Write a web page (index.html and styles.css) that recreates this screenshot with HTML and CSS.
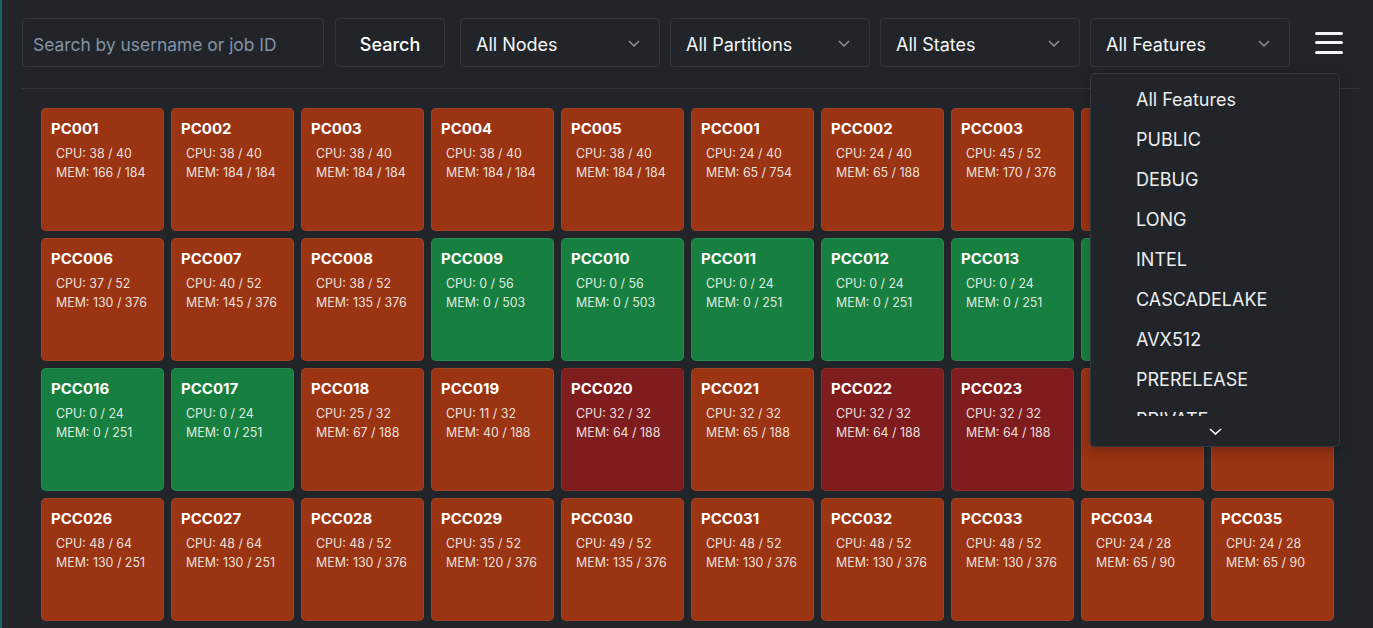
FILE: index.html
```html
<!DOCTYPE html>
<html lang="en">
<head>
<meta charset="utf-8">
<title>Cluster Nodes</title>
<link rel="stylesheet" href="styles.css">
</head>
<body>
<div class="app">
  <header class="toolbar">
    <input class="search-input" type="text" placeholder="Search by username or job ID">
    <button class="btn-search">Search</button>
    <div class="select">
      <span>All Nodes</span>
      <svg class="chev" width="12" height="7" viewBox="0 0 12 7"><polyline points="1,1 6,6 11,1" fill="none" stroke="#8b9096" stroke-width="1.5"/></svg>
    </div>
    <div class="select">
      <span>All Partitions</span>
      <svg class="chev" width="12" height="7" viewBox="0 0 12 7"><polyline points="1,1 6,6 11,1" fill="none" stroke="#8b9096" stroke-width="1.5"/></svg>
    </div>
    <div class="select">
      <span>All States</span>
      <svg class="chev" width="12" height="7" viewBox="0 0 12 7"><polyline points="1,1 6,6 11,1" fill="none" stroke="#8b9096" stroke-width="1.5"/></svg>
    </div>
    <div class="select select-open">
      <span>All Features</span>
      <svg class="chev" width="12" height="7" viewBox="0 0 12 7"><polyline points="1,1 6,6 11,1" fill="none" stroke="#8b9096" stroke-width="1.5"/></svg>
      <div class="dropdown">
        <ul class="dropdown-list">
          <li>All Features</li>
          <li>PUBLIC</li>
          <li>DEBUG</li>
          <li>LONG</li>
          <li>INTEL</li>
          <li>CASCADELAKE</li>
          <li>AVX512</li>
          <li>PRERELEASE</li>
          <li>PRIVATE</li>
          <li>AMD</li>
        </ul>
        <div class="dropdown-more">
          <svg width="13" height="7" viewBox="0 0 13 7"><polyline points="1,1 6.5,6 12,1" fill="none" stroke="#ffffff" stroke-width="1.6"/></svg>
        </div>
      </div>
    </div>
    <button class="menu-btn" aria-label="Menu"><span></span><span></span><span></span></button>
  </header>
  <hr class="divider">
  <main class="grid">
    <div class="card busy"><div class="name">PC001</div><div class="stat">CPU: 38 / 40</div><div class="stat">MEM: 166 / 184</div></div>
    <div class="card busy"><div class="name">PC002</div><div class="stat">CPU: 38 / 40</div><div class="stat">MEM: 184 / 184</div></div>
    <div class="card busy"><div class="name">PC003</div><div class="stat">CPU: 38 / 40</div><div class="stat">MEM: 184 / 184</div></div>
    <div class="card busy"><div class="name">PC004</div><div class="stat">CPU: 38 / 40</div><div class="stat">MEM: 184 / 184</div></div>
    <div class="card busy"><div class="name">PC005</div><div class="stat">CPU: 38 / 40</div><div class="stat">MEM: 184 / 184</div></div>
    <div class="card busy"><div class="name">PCC001</div><div class="stat">CPU: 24 / 40</div><div class="stat">MEM: 65 / 754</div></div>
    <div class="card busy"><div class="name">PCC002</div><div class="stat">CPU: 24 / 40</div><div class="stat">MEM: 65 / 188</div></div>
    <div class="card busy"><div class="name">PCC003</div><div class="stat">CPU: 45 / 52</div><div class="stat">MEM: 170 / 376</div></div>
    <div class="card busy"><div class="name">PCC004</div><div class="stat">CPU: 40 / 52</div><div class="stat">MEM: 150 / 376</div></div>
    <div class="card busy"><div class="name">PCC005</div><div class="stat">CPU: 40 / 52</div><div class="stat">MEM: 150 / 376</div></div>

    <div class="card busy"><div class="name">PCC006</div><div class="stat">CPU: 37 / 52</div><div class="stat">MEM: 130 / 376</div></div>
    <div class="card busy"><div class="name">PCC007</div><div class="stat">CPU: 40 / 52</div><div class="stat">MEM: 145 / 376</div></div>
    <div class="card busy"><div class="name">PCC008</div><div class="stat">CPU: 38 / 52</div><div class="stat">MEM: 135 / 376</div></div>
    <div class="card idle"><div class="name">PCC009</div><div class="stat">CPU: 0 / 56</div><div class="stat">MEM: 0 / 503</div></div>
    <div class="card idle"><div class="name">PCC010</div><div class="stat">CPU: 0 / 56</div><div class="stat">MEM: 0 / 503</div></div>
    <div class="card idle"><div class="name">PCC011</div><div class="stat">CPU: 0 / 24</div><div class="stat">MEM: 0 / 251</div></div>
    <div class="card idle"><div class="name">PCC012</div><div class="stat">CPU: 0 / 24</div><div class="stat">MEM: 0 / 251</div></div>
    <div class="card idle"><div class="name">PCC013</div><div class="stat">CPU: 0 / 24</div><div class="stat">MEM: 0 / 251</div></div>
    <div class="card idle"><div class="name">PCC014</div><div class="stat">CPU: 0 / 24</div><div class="stat">MEM: 0 / 251</div></div>
    <div class="card idle"><div class="name">PCC015</div><div class="stat">CPU: 0 / 24</div><div class="stat">MEM: 0 / 251</div></div>

    <div class="card idle"><div class="name">PCC016</div><div class="stat">CPU: 0 / 24</div><div class="stat">MEM: 0 / 251</div></div>
    <div class="card idle"><div class="name">PCC017</div><div class="stat">CPU: 0 / 24</div><div class="stat">MEM: 0 / 251</div></div>
    <div class="card busy"><div class="name">PCC018</div><div class="stat">CPU: 25 / 32</div><div class="stat">MEM: 67 / 188</div></div>
    <div class="card busy"><div class="name">PCC019</div><div class="stat">CPU: 11 / 32</div><div class="stat">MEM: 40 / 188</div></div>
    <div class="card full"><div class="name">PCC020</div><div class="stat">CPU: 32 / 32</div><div class="stat">MEM: 64 / 188</div></div>
    <div class="card busy"><div class="name">PCC021</div><div class="stat">CPU: 32 / 32</div><div class="stat">MEM: 65 / 188</div></div>
    <div class="card full"><div class="name">PCC022</div><div class="stat">CPU: 32 / 32</div><div class="stat">MEM: 64 / 188</div></div>
    <div class="card full"><div class="name">PCC023</div><div class="stat">CPU: 32 / 32</div><div class="stat">MEM: 64 / 188</div></div>
    <div class="card busy"><div class="name">PCC024</div><div class="stat">CPU: 24 / 32</div><div class="stat">MEM: 65 / 188</div></div>
    <div class="card busy"><div class="name">PCC025</div><div class="stat">CPU: 24 / 32</div><div class="stat">MEM: 65 / 188</div></div>

    <div class="card busy"><div class="name">PCC026</div><div class="stat">CPU: 48 / 64</div><div class="stat">MEM: 130 / 251</div></div>
    <div class="card busy"><div class="name">PCC027</div><div class="stat">CPU: 48 / 64</div><div class="stat">MEM: 130 / 251</div></div>
    <div class="card busy"><div class="name">PCC028</div><div class="stat">CPU: 48 / 52</div><div class="stat">MEM: 130 / 376</div></div>
    <div class="card busy"><div class="name">PCC029</div><div class="stat">CPU: 35 / 52</div><div class="stat">MEM: 120 / 376</div></div>
    <div class="card busy"><div class="name">PCC030</div><div class="stat">CPU: 49 / 52</div><div class="stat">MEM: 135 / 376</div></div>
    <div class="card busy"><div class="name">PCC031</div><div class="stat">CPU: 48 / 52</div><div class="stat">MEM: 130 / 376</div></div>
    <div class="card busy"><div class="name">PCC032</div><div class="stat">CPU: 48 / 52</div><div class="stat">MEM: 130 / 376</div></div>
    <div class="card busy"><div class="name">PCC033</div><div class="stat">CPU: 48 / 52</div><div class="stat">MEM: 130 / 376</div></div>
    <div class="card busy"><div class="name">PCC034</div><div class="stat">CPU: 24 / 28</div><div class="stat">MEM: 65 / 90</div></div>
    <div class="card busy"><div class="name">PCC035</div><div class="stat">CPU: 24 / 28</div><div class="stat">MEM: 65 / 90</div></div>
  </main>
</div>
</body>
</html>
```

FILE: styles.css
```css
html, body {
  margin: 0;
  padding: 0;
  height: 100%;
  overflow: hidden;
  background: #212529;
}

body {
  font-family: Inter, "Liberation Sans", sans-serif;
  color: #f1f3f5;
}

.app {
  min-height: 100%;
  box-sizing: border-box;
  padding: 18px 12px 0 22px;
  box-shadow: inset 2px 0 0 #186468;
}

.toolbar {
  display: flex;
  align-items: center;
  height: 49px;
}

.search-input {
  box-sizing: border-box;
  width: 302px;
  height: 49px;
  padding: 3px 10px 0 10px;
  background: #212529;
  border: 1px solid #33373d;
  border-radius: 4px;
  color: #f1f3f5;
  font-family: inherit;
  font-size: 17.4px;
  outline: none;
}

.search-input::placeholder {
  color: #8393a7;
}

.btn-search {
  box-sizing: border-box;
  width: 110px;
  height: 49px;
  margin-left: 11px;
  padding: 3px 0 0 0;
  background: #212529;
  border: 1px solid #33373d;
  border-radius: 4px;
  color: #ffffff;
  font-family: inherit;
  font-size: 18px;
  font-weight: 500;
}

.select {
  position: relative;
  box-sizing: border-box;
  width: 200px;
  height: 49px;
  margin-left: 10px;
  padding: 0 19px 0 15px;
  display: flex;
  align-items: center;
  justify-content: space-between;
  border: 1px solid #33373d;
  border-radius: 4px;
  font-size: 18px;
  color: #f4f5f7;
}

.select > span {
  padding-top: 3px;
}

.btn-search + .select {
  margin-left: 15px;
}

.chev {
  display: block;
  margin-top: 1px;
}

.dropdown {
  position: absolute;
  top: 54px;
  left: -1px;
  width: 250px;
  height: 374px;
  box-sizing: border-box;
  background: #212529;
  border: 1px solid #34383e;
  border-radius: 4px;
  display: flex;
  flex-direction: column;
  z-index: 10;
  box-shadow: 0 4px 12px rgba(0, 0, 0, 0.25);
}

.dropdown-list {
  list-style: none;
  margin: 0;
  padding: 6px 0 0 0;
  height: 342px;
  overflow: hidden;
  box-sizing: border-box;
}

.dropdown-list li {
  height: 40px;
  line-height: 40px;
  padding-left: 45px;
  font-size: 18px;
  color: #eceef0;
}

.dropdown-more {
  flex: 1;
  display: flex;
  align-items: center;
  justify-content: center;
  padding-top: 1px;
}

.dropdown-more svg {
  display: block;
}

.menu-btn {
  margin-left: 25px;
  padding: 0;
  width: 28px;
  background: none;
  border: none;
  display: flex;
  flex-direction: column;
  gap: 6.5px;
}

.menu-btn span {
  display: block;
  width: 28px;
  height: 3px;
  border-radius: 1.5px;
  background: #f3f4f6;
}

.divider {
  margin: 21px 0 0 0;
  border: 0;
  border-top: 1px solid #33373d;
  height: 0;
}

.grid {
  display: grid;
  grid-template-columns: repeat(10, 123px);
  grid-auto-rows: 123px;
  gap: 7px;
  padding: 19px 0 0 19px;
}

.card {
  box-sizing: border-box;
  border: 1px solid rgba(255, 255, 255, 0.08);
  border-radius: 5px;
  padding: 10px 9px 9px 9px;
}

.card.busy { background: #9a3413; }
.card.idle { background: #178040; }
.card.full { background: #7f1d1e; }

.name {
  font-size: 15px;
  font-weight: 700;
  line-height: 20px;
  color: #ffffff;
}

.stat {
  margin-left: 5px;
  font-size: 12.4px;
  line-height: 19px;
  color: rgba(255, 255, 255, 0.86);
}

.name + .stat {
  margin-top: 5px;
}
```
